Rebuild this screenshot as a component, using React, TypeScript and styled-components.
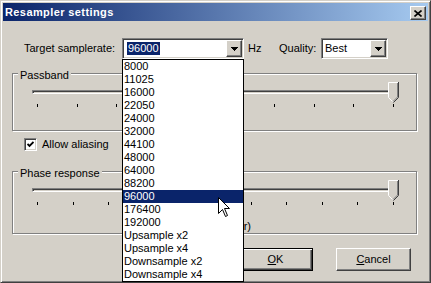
import React from "react";
import styled, { createGlobalStyle, css } from "styled-components";

const C = {
  face: "#D4D0C8",
  light: "#FFFFFF",
  shadow: "#808080",
  dark: "#404040",
  navy: "#0A246A",
};

const Global = createGlobalStyle`
  html, body { margin: 0; padding: 0; background: ${C.face}; overflow: hidden; }
  body { font-family: "Liberation Sans", Arial, sans-serif; font-size: 11px; color: #000; }
  * { box-sizing: border-box; }
`;

const raised = css`
  border: 1px solid;
  border-color: ${C.light} ${C.dark} ${C.dark} ${C.light};
  box-shadow: inset -1px -1px ${C.shadow};
  background: ${C.face};
`;

const sunken = css`
  border: 1px solid;
  border-color: ${C.shadow} ${C.light} ${C.light} ${C.shadow};
  box-shadow: inset 1px 1px ${C.dark}, inset -1px -1px ${C.face};
`;

const Window = styled.div`
  position: relative;
  width: 431px;
  height: 283px;
  background: ${C.face};
  border: 1px solid;
  border-color: ${C.face} ${C.dark} ${C.dark} ${C.face};
  box-shadow: inset 1px 1px ${C.light}, inset -1px -1px ${C.shadow};
  padding: 2px;
`;

const TitleBar = styled.div`
  height: 18px;
  display: flex;
  align-items: flex-start;
  justify-content: space-between;
  padding: 0 2px;
  background: linear-gradient(to right, #0a246a, #a6caf0);
`;

const Title = styled.span`
  margin-top: 3px;
  color: #fff;
  font-weight: bold;
  font-size: 11px;
  letter-spacing: 0.4px;
  line-height: 13px;
  white-space: nowrap;
`;

const CloseBtn = styled.div`
  ${raised};
  margin-top: 3px;
  width: 16px;
  height: 14px;
  display: flex;
  align-items: center;
  justify-content: center;
`;

const Body = styled.div`
  display: flex;
  flex-direction: column;
  padding: 17px 0 0 9px;
`;

const TopRow = styled.div`
  display: flex;
  align-items: center;
  height: 21px;
  padding-left: 12px;
`;

const Label = styled.span<{ $w: number; $ml?: number }>`
  width: ${(p) => p.$w}px;
  margin-left: ${(p) => p.$ml ?? 0}px;
  white-space: nowrap;
  line-height: 13px;
`;

const Combo = styled.div<{ $w: number }>`
  ${sunken};
  width: ${(p) => p.$w}px;
  height: 21px;
  padding: 1px;
  background: #fff;
  display: flex;
  align-items: center;
`;

const ComboValue = styled.div`
  flex: 1;
  display: flex;
  align-items: center;
  padding-left: 2px;
  line-height: 13px;
`;

const Selected = styled.span`
  margin-left: 1px;
  padding: 0 1px;
  background: ${C.navy};
  color: #fff;
  line-height: 13px;
`;

const DropBtn = styled.div`
  ${raised};
  width: 16px;
  height: 17px;
  display: flex;
  align-items: center;
  justify-content: center;
`;

const Group = styled.div<{ $h: number; $mt: number }>`
  display: flex;
  flex-direction: column;
  width: 405px;
  height: ${(p) => p.$h}px;
  margin-top: ${(p) => p.$mt}px;
  border: 1px solid ${C.shadow};
  box-shadow: inset 1px 1px ${C.light}, 1px 1px ${C.light};
`;

const GroupTitle = styled.span`
  align-self: flex-start;
  margin: -5px 0 0 5px;
  padding: 0 2px;
  line-height: 13px;
  background: ${C.face};
  white-space: nowrap;
`;

const SliderBox = styled.div`
  position: relative;
  margin-left: 16px;
  width: 373px;
  height: 25px;
  display: flex;
  flex-direction: column;
`;

const Track = styled.div`
  margin: 8px 3px 0;
  height: 4px;
  border: 1px solid;
  border-color: ${C.shadow} ${C.light} ${C.light} ${C.shadow};
  box-shadow: inset 1px 1px ${C.dark};
  background: ${C.face};
`;

const Ticks = styled.div`
  margin: 10px 8px 0;
  height: 3px;
  display: flex;
  justify-content: space-between;
`;

const Tick = styled.span`
  width: 1px;
  height: 3px;
  background: #000;
`;

const Thumb = styled.svg`
  position: absolute;
  left: 359px;
  top: 0;
`;

const CheckRow = styled.label`
  display: flex;
  align-items: center;
  gap: 5px;
  height: 13px;
  margin-top: 7px;
  padding-left: 12px;
  line-height: 13px;
`;

const CheckBox = styled.span`
  ${sunken};
  width: 13px;
  height: 13px;
  background: #fff;
  display: flex;
  align-items: center;
  justify-content: center;
`;

const Caption = styled.div`
  width: 238px;
  margin-top: 15px;
  text-align: right;
  line-height: 13px;
  white-space: nowrap;
`;

const ButtonRow = styled.div`
  display: flex;
  gap: 23px;
  margin-top: 14px;
  padding-left: 226px;
`;

const Button = styled.div<{ $default?: boolean }>`
  ${raised};
  width: 75px;
  height: 23px;
  display: flex;
  align-items: center;
  justify-content: center;
  line-height: 13px;
  ${(p) =>
    p.$default &&
    css`
      border: 1px solid #000;
      box-shadow: inset 1px 1px ${C.light}, inset -1px -1px ${C.dark},
        inset -2px -2px ${C.shadow};
    `}
`;

const DropList = styled.ul`
  position: absolute;
  left: 121px;
  top: 58px;
  width: 122px;
  margin: 0;
  padding: 0;
  list-style: none;
  background: #fff;
  border: 1px solid #000;
`;

const Item = styled.li<{ $sel?: boolean }>`
  height: 13px;
  line-height: 13px;
  padding-left: 1px;
  white-space: nowrap;
  background: ${(p) => (p.$sel ? C.navy : "transparent")};
  color: ${(p) => (p.$sel ? "#fff" : "#000")};
`;

const Cursor = styled.svg`
  position: absolute;
  left: 217px;
  top: 196px;
`;

const Arrow = () => (
  <svg width="7" height="4" viewBox="0 0 7 4" shapeRendering="crispEdges">
    <path d="M0 0h7v1h-1v1h-1v1h-1v1h-1v-1h-1v-1h-1v-1h-1z" fill="#000" />
  </svg>
);

const Slider: React.FC<{ ticks: number }> = ({ ticks }) => (
  <SliderBox>
    <Track />
    <Ticks>
      {Array.from({ length: ticks }).map((_, i) => (
        <Tick key={i} />
      ))}
    </Ticks>
    <Thumb width="11" height="21" viewBox="0 0 11 21">
      <polygon points="0,0 11,0 11,15 5.5,20.5 0,15" fill={C.face} />
      <polyline points="0.5,15.5 0.5,0.5 10,0.5" fill="none" stroke="#fff" />
      <line x1="0.5" y1="15.5" x2="5" y2="20" stroke="#fff" />
      <polyline points="9.5,1 9.5,15 5,19.5" fill="none" stroke={C.shadow} />
      <polyline points="10.5,0 10.5,15.5 5.5,20.5" fill="none" stroke={C.dark} />
    </Thumb>
  </SliderBox>
);

const rates = [
  "8000",
  "11025",
  "16000",
  "22050",
  "24000",
  "32000",
  "44100",
  "48000",
  "64000",
  "88200",
  "96000",
  "176400",
  "192000",
  "Upsample x2",
  "Upsample x4",
  "Downsample x2",
  "Downsample x4",
];

export default function App() {
  return (
    <>
      <Global />
      <Window>
        <TitleBar>
          <Title>Resampler settings</Title>
          <CloseBtn>
            <svg width="8" height="7" viewBox="0 0 8 7">
              <path d="M0.5 0.5 L7.5 6.5 M7.5 0.5 L0.5 6.5" stroke="#000" strokeWidth="1.6" />
            </svg>
          </CloseBtn>
        </TitleBar>
        <Body>
          <TopRow>
            <Label $w={98}>Target samplerate:</Label>
            <Combo $w={122}>
              <ComboValue>
                <Selected>96000</Selected>
              </ComboValue>
              <DropBtn>
                <Arrow />
              </DropBtn>
            </Combo>
            <Label $w={31} $ml={4}>
              Hz
            </Label>
            <Label $w={42}>Quality:</Label>
            <Combo $w={67}>
              <ComboValue>Best</ComboValue>
              <DropBtn>
                <Arrow />
              </DropBtn>
            </Combo>
          </TopRow>

          <Group $h={58} $mt={14}>
            <GroupTitle>Passband</GroupTitle>
            <Slider ticks={10} />
          </Group>

          <CheckRow>
            <CheckBox>
              <svg width="7" height="7" viewBox="0 0 7 7">
                <polyline points="0.5,3 2.5,5 6.5,1" fill="none" stroke="#000" strokeWidth="1.8" />
              </svg>
            </CheckBox>
            <span>Allow aliasing</span>
          </CheckRow>

          <Group $h={63} $mt={20}>
            <GroupTitle>Phase response</GroupTitle>
            <Slider ticks={11} />
            <Caption>(linear, slower)</Caption>
          </Group>

          <ButtonRow>
            <Button $default>
              <span>
                <u>O</u>K
              </span>
            </Button>
            <Button>
              <span>
                <u>C</u>ancel
              </span>
            </Button>
          </ButtonRow>
        </Body>

        <DropList>
          {rates.map((r) => (
            <Item key={r} $sel={r === "96000"}>
              {r}
            </Item>
          ))}
        </DropList>

        <Cursor width="13" height="21" viewBox="0 0 13 21">
          <polygon
            points="0.5,0.5 0.5,16.5 4.5,12.5 7.5,19.5 9.5,18.5 6.5,11.5 11.5,11.5"
            fill="#fff"
            stroke="#000"
            strokeWidth="1"
          />
        </Cursor>
      </Window>
    </>
  );
}
